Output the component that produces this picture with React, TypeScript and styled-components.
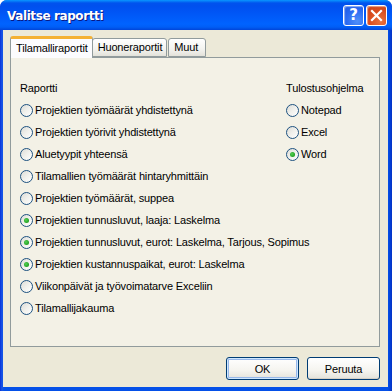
import React, { useState } from 'react'
import styled, { createGlobalStyle } from 'styled-components'

const Global = createGlobalStyle`
    html, body {
        margin: 0;
        padding: 0;
        background: #ffffff;
    }
    * {
        box-sizing: border-box;
    }
`

const Window = styled.div`
    width: 392px;
    height: 391px;
    display: flex;
    flex-direction: column;
    background: linear-gradient(90deg, #0831d9 0px, #1955e6 2px, #0450e8 4px, #0450e8 388px, #0331c4 392px);
    border-radius: 7px 7px 0 0;
    overflow: hidden;
    font-family: 'Liberation Sans', Arial, sans-serif;
    font-size: 11px;
    letter-spacing: -0.15px;
    color: #000;
`

const TitleBar = styled.div`
    height: 30px;
    flex-shrink: 0;
    display: flex;
    align-items: center;
    padding: 0 5px 0 7px;
    background: linear-gradient(180deg, #0997ff 0px, #0053ee 3px, #0050ee 6px, #0055f5 12px, #0063ff 24px, #005ef6 27px, #0045d9 30px);
`

const Title = styled.div`
    flex: 1;
    color: #ffffff;
    font-family: 'DejaVu Sans', 'Liberation Sans', sans-serif;
    font-weight: bold;
    font-size: 12px;
    letter-spacing: -0.4px;
    text-shadow: 1px 1px 0 #0a1883;
    padding-top: 1px;
`

const CaptionButton = styled.div<{ $kind: 'help' | 'close' }>`
    width: 21px;
    height: 21px;
    margin-left: 2px;
    border: 1px solid #ffffff;
    border-radius: 3px;
    display: flex;
    align-items: center;
    justify-content: center;
    color: #ffffff;
    font-family: 'DejaVu Sans', sans-serif;
    font-weight: bold;
    font-size: 15px;
    background: ${p => p.$kind === 'close'
        ? 'radial-gradient(circle at 70% 80%, #e8733e 0%, #d94c1e 55%, #c43e13 100%)'
        : 'radial-gradient(circle at 70% 80%, #4f8ff9 0%, #2a6af2 55%, #1d56e0 100%)'};
    box-shadow: inset 1px 1px 1px rgba(255, 255, 255, 0.5);
`

const Client = styled.div`
    flex: 1;
    margin: 0 4px 4px 3px;
    background: #ece9d8;
    padding: 6px 8px 0 7px;
    display: flex;
    flex-direction: column;
`

const TabStrip = styled.div`
    height: 21px;
    display: flex;
    align-items: flex-end;
    position: relative;
    z-index: 1;
`

const Tab = styled.div<{ $active?: boolean; $min?: number }>`
    height: ${p => (p.$active ? '22px' : '19px')};
    min-width: ${p => (p.$min ? `${p.$min}px` : '0')};
    margin-bottom: ${p => (p.$active ? '-1px' : '0')};
    padding: ${p => (p.$active ? '3px 4px 0 5px' : '2px 4px 0 5px')};
    border: 1px solid #919b9c;
    border-bottom: ${p => (p.$active ? 'none' : '1px solid #919b9c')};
    border-top: ${p => (p.$active ? '3px solid #f4b133' : '1px solid #919b9c')};
    border-radius: 3px 3px 0 0;
    margin-right: ${p => (p.$active ? '-1px' : '1px')};
    background: ${p => (p.$active ? '#fcfcfe' : 'linear-gradient(180deg, #ffffff 0%, #f3f3ef 60%, #e3e2da 100%)')};
    white-space: nowrap;
    position: relative;
    z-index: ${p => (p.$active ? 2 : 1)};
`

const Panel = styled.div`
    height: 290px;
    border: 1px solid #919b9c;
    background: #f3f1e6;
    padding: 22px 0 0 9px;
    display: flex;
`

const Column = styled.div<{ $width?: string }>`
    width: ${p => p.$width || 'auto'};
    flex: ${p => (p.$width ? 'none' : '1')};
    min-width: 0;
    display: flex;
    flex-direction: column;
`

const GroupLabel = styled.div`
    height: 17px;
    line-height: 17px;
    margin-bottom: 2px;
`

const Option = styled.label`
    height: 22px;
    display: flex;
    align-items: center;
    gap: 2px;
    cursor: default;
    white-space: nowrap;
`

const Circle = styled.span<{ $checked: boolean }>`
    width: 13px;
    height: 13px;
    flex-shrink: 0;
    border-radius: 50%;
    border: 1px solid #1c5180;
    background: linear-gradient(135deg, #dcdcd7 0%, #f0f0ec 50%, #ffffff 100%);
    display: flex;
    align-items: center;
    justify-content: center;
    &::after {
        content: '';
        display: ${p => (p.$checked ? 'block' : 'none')};
        width: 5px;
        height: 5px;
        border-radius: 50%;
        background: radial-gradient(circle at 40% 40%, #55d055 0%, #21a121 70%, #1a8a1a 100%);
    }
`

const ButtonRow = styled.div`
    display: flex;
    justify-content: flex-end;
    gap: 8px;
    padding-top: 10px;
`

const Button = styled.button<{ $default?: boolean }>`
    width: 73px;
    height: 23px;
    border: 1px solid #003c74;
    border-radius: 3px;
    background: linear-gradient(180deg, #ffffff 0%, #f5f4ef 60%, #e3e2da 100%);
    box-shadow: ${p => (p.$default
        ? 'inset 0 0 0 1px #cee7ff, inset 0 0 0 2px #98b8ea'
        : 'inset 0 -1px 0 #d6d0c5')};
    font-family: 'Liberation Sans', Arial, sans-serif;
    font-size: 11px;
    letter-spacing: -0.15px;
    color: #000;
    padding: 0;
`

const reports = [
    'Projektien työmäärät yhdistettynä',
    'Projektien työrivit yhdistettynä',
    'Aluetyypit yhteensä',
    'Tilamallien työmäärät hintaryhmittäin',
    'Projektien työmäärät, suppea',
    'Projektien tunnusluvut, laaja: Laskelma',
    'Projektien tunnusluvut, eurot: Laskelma, Tarjous, Sopimus',
    'Projektien kustannuspaikat, eurot: Laskelma',
    'Viikonpäivät ja työvoimatarve Exceliin',
    'Tilamallijakauma',
]

const programs = ['Notepad', 'Excel', 'Word']

function Radio({ label, checked, onClick }: { label: string; checked: boolean; onClick: () => void }) {
    return (
        <Option onClick={onClick}>
            <Circle $checked={checked} />
            {label}
        </Option>
    )
}

export default function App() {
    const [checkedReports, setCheckedReports] = useState<number[]>([5, 6, 7])
    const [program, setProgram] = useState(2)

    return (
        <>
            <Global />
            <Window>
                <TitleBar>
                    <Title>Valitse raportti</Title>
                    <CaptionButton $kind="help">?</CaptionButton>
                    <CaptionButton $kind="close">
                        <svg width="13" height="13" viewBox="0 0 13 13">
                            <path d="M2 2 L11 11 M11 2 L2 11" stroke="#ffffff" strokeWidth="2.2" strokeLinecap="square" />
                        </svg>
                    </CaptionButton>
                </TitleBar>
                <Client>
                    <TabStrip>
                        <Tab $active>Tilamalliraportit</Tab>
                        <Tab>Huoneraportit</Tab>
                        <Tab $min={38}>Muut</Tab>
                    </TabStrip>
                    <Panel>
                        <Column $width="266px">
                            <GroupLabel>Raportti</GroupLabel>
                            {reports.map((r, i) => (
                                <Radio
                                    key={r}
                                    label={r}
                                    checked={checkedReports.includes(i)}
                                    onClick={() => setCheckedReports([i])}
                                />
                            ))}
                        </Column>
                        <Column>
                            <GroupLabel>Tulostusohjelma</GroupLabel>
                            {programs.map((p, i) => (
                                <Radio key={p} label={p} checked={program === i} onClick={() => setProgram(i)} />
                            ))}
                        </Column>
                    </Panel>
                    <ButtonRow>
                        <Button $default>OK</Button>
                        <Button>Peruuta</Button>
                    </ButtonRow>
                </Client>
            </Window>
        </>
    )
}
